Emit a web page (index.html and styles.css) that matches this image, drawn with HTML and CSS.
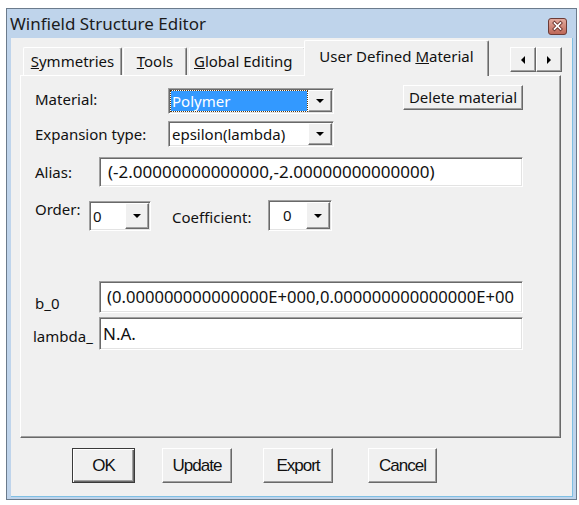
FILE: index.html
```html
<!DOCTYPE html>
<html lang="en">

<head>
    <meta charset="UTF-8">
    <meta name="viewport" content="width=device-width, initial-scale=1.0">
    <title>Winfield Structure Editor</title>
    <link rel="stylesheet" href="styles.css">
</head>

<body>
    <div class="window">
        <div class="titlebar">
            <span class="title">Winfield Structure Editor</span>
            <span class="close-btn">
                <svg width="19" height="17" viewBox="0 0 19 17">
                    <defs>
                        <linearGradient id="closeGrad" x1="0" y1="0" x2="0" y2="1">
                            <stop offset="0" stop-color="#e3aca0" />
                            <stop offset="1" stop-color="#bd6555" />
                        </linearGradient>
                    </defs>
                    <rect x="0.5" y="0.5" width="18" height="16" rx="2.5" fill="url(#closeGrad)" stroke="#6b3b36" />
                    <path d="M6.5 5 L12.5 11 M12.5 5 L6.5 11" stroke="#6a312b" stroke-width="3.4" stroke-linecap="square" />
                    <path d="M6.5 5 L12.5 11 M12.5 5 L6.5 11" stroke="#ffffff" stroke-width="1.7" stroke-linecap="square" />
                </svg>
            </span>
        </div>

        <div class="client">
            <div class="tabstrip">
                <div class="tab tab-symm"><u>S</u>ymmetries</div>
                <div class="tab tab-tools"><u>T</u>ools</div>
                <div class="tab tab-global"><u>G</u>lobal Editing</div>
                <div class="tab tab-active">User Defined <u>M</u>aterial</div>
                <div class="tab-scroll">
                    <div class="raised scroll-btn"><span class="arrow-left"></span></div>
                    <div class="raised scroll-btn"><span class="arrow-right"></span></div>
                </div>
            </div>

            <div class="panel">
                <div class="row row-material">
                    <label class="lbl lbl-wide">Material:</label>
                    <div class="sunken combo combo-material">
                        <div class="combo-text focused">Polymer</div>
                        <div class="raised combo-btn"><span class="arrow-down"></span></div>
                    </div>
                    <div class="raised btn-delete">Delete material</div>
                </div>

                <div class="row row-expansion">
                    <label class="lbl lbl-wide">Expansion type:</label>
                    <div class="sunken combo combo-expansion">
                        <div class="combo-text">epsilon(lambda)</div>
                        <div class="raised combo-btn"><span class="arrow-down"></span></div>
                    </div>
                </div>

                <div class="row row-alias">
                    <label class="lbl lbl-short">Alias:</label>
                    <div class="sunken field field-alias">(-2.00000000000000,-2.00000000000000)</div>
                </div>

                <div class="row row-order">
                    <label class="lbl lbl-order">Order:</label>
                    <div class="sunken combo combo-order">
                        <div class="combo-text">0</div>
                        <div class="raised combo-btn"><span class="arrow-down"></span></div>
                    </div>
                    <label class="lbl lbl-coef">Coefficient:</label>
                    <div class="sunken combo combo-coef">
                        <div class="combo-text">0</div>
                        <div class="raised combo-btn"><span class="arrow-down"></span></div>
                    </div>
                </div>

                <div class="row row-b0">
                    <label class="lbl lbl-short lbl-b0">b_0</label>
                    <div class="sunken field field-b0">(0.000000000000000E+000,0.000000000000000E+00</div>
                </div>

                <div class="row row-lambda">
                    <label class="lbl lbl-short lbl-lambda">lambda_</label>
                    <div class="sunken field field-lambda">N.A.</div>
                </div>
            </div>

            <div class="buttons">
                <div class="raised dlg-btn btn-ok">OK</div>
                <div class="raised dlg-btn btn-update">Update</div>
                <div class="raised dlg-btn btn-export">Export</div>
                <div class="raised dlg-btn btn-cancel">Cancel</div>
            </div>
        </div>
    </div>
</body>

</html>
```

FILE: styles.css
```css
body {
    margin: 0;
    background-color: #ffffff;
    font-family: "Noto Sans", sans-serif;
    font-size: 15px;
    color: #111111;
}

/* window frame */
.window {
    box-sizing: border-box;
    width: 571px;
    height: 492px;
    margin: 8px 0 0 6px;
    border: 1px solid #6b7b8c;
    background-color: #bfd4eb;
    display: flex;
    flex-direction: column;
}

.titlebar {
    flex: none;
    height: 29px;
    display: flex;
    align-items: center;
    padding: 0 9px 0 3px;
}

.title {
    font-size: 17px;
    color: #1b1b1b;
    white-space: nowrap;
}

.close-btn {
    margin-left: auto;
    align-self: flex-end;
    margin-bottom: 3px;
    height: 17px;
}

.client {
    flex: 1;
    margin: 0 3px 2px 4px;
    background-color: #f0f0f0;
    border-bottom: 1px solid #7fbfe4;
    border-right: 1px solid #7fbfe4;
    display: flex;
    flex-direction: column;
}

/* shared 3D looks */
.raised {
    box-sizing: border-box;
    background-color: #f0f0f0;
    border: 1px solid;
    border-color: #ffffff #696969 #696969 #ffffff;
    box-shadow: inset -1px -1px #a0a0a0;
}

.sunken {
    box-sizing: border-box;
    background-color: #ffffff;
    border: 1px solid;
    border-color: #a0a0a0 #ffffff #ffffff #a0a0a0;
    padding: 1px;
    box-shadow: inset 1px 1px #696969, inset -1px -1px #e3e3e3;
}

/* tabs */
.tabstrip {
    flex: none;
    height: 37px;
    display: flex;
    align-items: flex-end;
    padding: 0 10px 0 12px;
}

.tab {
    box-sizing: border-box;
    height: 28px;
    line-height: 26px;
    text-align: center;
    white-space: nowrap;
    border-top: 1px solid #ffffff;
    border-left: 1px solid #ffffff;
    border-right: 1px solid #696969;
    box-shadow: inset -1px 0 #a0a0a0;
    border-radius: 2px 2px 0 0;
}

.tab-symm {
    width: 99px;
}

.tab-tools {
    width: 64px;
    margin-left: 1px;
}

.tab-global {
    width: 117px;
    margin-left: 2px;
    padding-left: 4px;
    text-align: left;
    overflow: hidden;
}

.tab-active {
    width: 185px;
    height: 36px;
    line-height: 30px;
    margin-left: -2px;
    margin-bottom: -1px;
    background-color: #f0f0f0;
    position: relative;
    z-index: 1;
}

.tab-scroll {
    display: flex;
    align-self: flex-start;
    margin-top: 9px;
    margin-left: auto;
}

.scroll-btn {
    width: 26px;
    height: 25px;
    display: flex;
    align-items: center;
    justify-content: center;
}

.arrow-left {
    border-right: 4px solid #000000;
    border-top: 4px solid transparent;
    border-bottom: 4px solid transparent;
}

.arrow-right {
    border-left: 4px solid #000000;
    border-top: 4px solid transparent;
    border-bottom: 4px solid transparent;
}

.arrow-down {
    border-top: 4px solid #000000;
    border-left: 4px solid transparent;
    border-right: 4px solid transparent;
}

/* tab page */
.panel {
    box-sizing: border-box;
    flex: none;
    height: 363px;
    margin: 0 11px 0 9px;
    border: 1px solid;
    border-color: #ffffff #696969 #696969 #ffffff;
    box-shadow: inset -1px -1px #a0a0a0;
    padding: 9px 37px 0 14px;
}

.row {
    display: flex;
    align-items: flex-start;
}

.lbl {
    white-space: nowrap;
}

.lbl-wide {
    width: 133px;
}

.lbl-short {
    width: 64px;
}

.row-material {
    height: 29px;
}

.row-material .lbl {
    line-height: 29px;
}

.row-expansion {
    height: 26px;
    margin-top: 7px;
}

.row-expansion .lbl {
    line-height: 26px;
}

.row-alias {
    height: 30px;
    margin-top: 10px;
}

.row-alias .lbl {
    line-height: 30px;
}

.row-order {
    height: 31px;
    margin-top: 13px;
}

.lbl-order {
    width: 54px;
    line-height: 18px;
}

.lbl-coef {
    width: 96px;
    margin-left: 21px;
    line-height: 34px;
}

.row-b0 {
    height: 32px;
    margin-top: 50px;
}

.lbl-b0 {
    align-self: flex-end;
    line-height: 20px;
}

.row-lambda {
    height: 33px;
    margin-top: 4px;
}

.lbl-lambda {
    width: 66px;
    margin-left: -2px;
    line-height: 33px;
    padding-top: 3px;
}

/* combo boxes */
.combo {
    display: flex;
    height: 26px;
    font-size: 15px;
}

.combo-text {
    flex: 1;
    margin: 1px;
    line-height: 20px;
    padding-left: 1px;
    white-space: nowrap;
    overflow: hidden;
}

.combo-text.focused {
    background-color: #3399ff;
    color: #ffffff;
    outline: 1px dotted #5a3a10;
}

.combo-btn {
    width: 24px;
    display: flex;
    align-items: center;
    justify-content: center;
}

.combo-material {
    width: 166px;
    margin-top: 3px;
}

.combo-expansion {
    width: 166px;
}

.combo-order {
    width: 62px;
    height: 30px;
    margin-top: 1px;
}

.combo-order .combo-text,
.combo-coef .combo-text {
    line-height: 24px;
}

.combo-coef {
    width: 64px;
    height: 31px;
}

.combo-coef .combo-text {
    padding-left: 12px;
}

/* edit fields */
.field {
    flex: 1;
    font-size: 17px;
    white-space: nowrap;
    overflow: hidden;
}

.field-alias {
    height: 30px;
    line-height: 26px;
    padding-left: 8px;
}

.field-b0 {
    height: 32px;
    line-height: 28px;
    padding-left: 7px;
    font-size: 16.6px;
}

.field-lambda {
    height: 33px;
    line-height: 29px;
    padding-left: 3px;
}

/* buttons */
.btn-delete {
    margin-left: auto;
    width: 120px;
    height: 25px;
    line-height: 23px;
    text-align: center;
    white-space: nowrap;
}

.buttons {
    flex: none;
    display: flex;
    height: 35px;
    margin-top: 10px;
    padding-left: 61px;
}

.dlg-btn {
    height: 35px;
    line-height: 33px;
    text-align: center;
    font-family: "Liberation Sans", sans-serif;
    font-size: 17px;
    letter-spacing: -1px;
}

.btn-ok {
    width: 63px;
    border-color: #3a3a3a;
    box-shadow: inset 1px 1px #ffffff, inset -1px -1px #696969, inset -2px -2px #a0a0a0;
}

.btn-update {
    width: 70px;
    margin-left: 27px;
}

.btn-export {
    width: 70px;
    margin-left: 31px;
}

.btn-cancel {
    width: 69px;
    margin-left: 35px;
}
```
